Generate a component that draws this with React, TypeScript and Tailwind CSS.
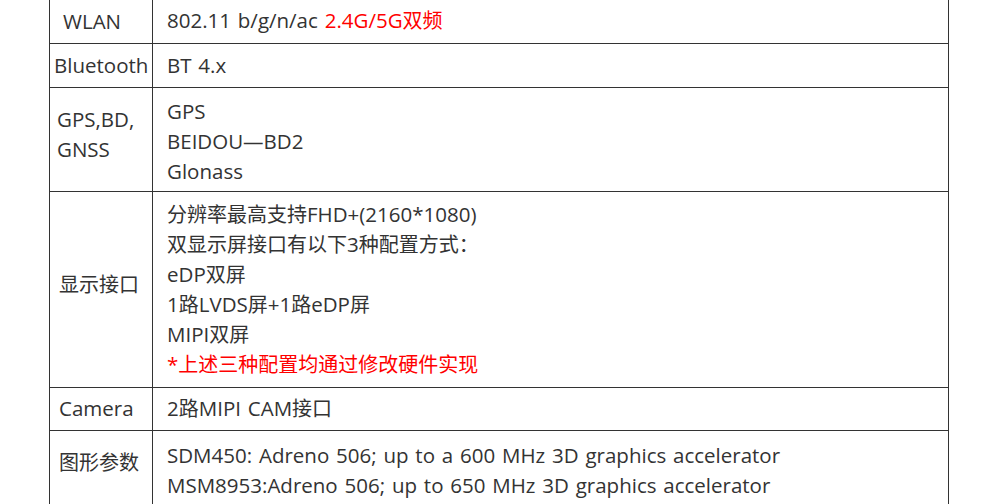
import type { ReactNode } from "react";

const CJK = /([\u3000-\u303f\u4e00-\u9fff\uff00-\uffef]+)/;

// latin runs are set a touch larger than the CJK runs, like the original's YaHei mix
function T({ s }: { s: string }) {
  return (
    <>
      {s.split(CJK).map((p, i) =>
        p === "" ? null : CJK.test(p) ? (
          <span key={i}>{p}</span>
        ) : (
          <span key={i} className="text-[20.5px] leading-none [word-spacing:1.5px]">
            {p}
          </span>
        ),
      )}
    </>
  );
}

type Row = {
  label: ReactNode;
  labelPad: string;
  lines: ReactNode[];
  h: string;
  textPad: string;
};

const rows: Row[] = [
  {
    label: <T s="WLAN" />,
    labelPad: "pl-[13px] pt-[7px]",
    lines: [
      <>
        <T s="802.11 b/g/n/ac " />
        <span className="text-[#ff0000]">
          <T s="2.4G/5G双频" />
        </span>
      </>,
    ],
    h: "h-[43px]",
    textPad: "pt-[6px]",
  },
  {
    label: <T s="Bluetooth" />,
    labelPad: "pl-[4px] pt-[7px]",
    lines: [<T s="BT 4.x" />],
    h: "h-[44px]",
    textPad: "pt-[7px]",
  },
  {
    label: (
      <>
        <T s="GPS,BD," />
        <br />
        <T s="GNSS" />
      </>
    ),
    labelPad: "pl-[7px] pt-[17px]",
    lines: [<T s="GPS" />, <T s="BEIDOU—BD2" />, <T s="Glonass" />],
    h: "h-[104px]",
    textPad: "pt-[9px]",
  },
  {
    label: "显示接口",
    labelPad: "pl-[9px] pt-[78px]",
    lines: [
      <T s="分辨率最高支持FHD+(2160*1080)" />,
      <T s="双显示屏接口有以下3种配置方式：" />,
      <T s="eDP双屏" />,
      <T s="1路LVDS屏+1路eDP屏" />,
      <T s="MIPI双屏" />,
      <span className="text-[#ff0000]">
        <T s="*上述三种配置均通过修改硬件实现" />
      </span>,
    ],
    h: "h-[196px]",
    textPad: "pt-[8px]",
  },
  {
    label: <T s="Camera" />,
    labelPad: "pl-[9px] pt-[6px]",
    lines: [<T s="2路MIPI CAM接口" />],
    h: "h-[43px]",
    textPad: "pt-[6px]",
  },
  {
    label: "图形参数",
    labelPad: "pl-[9px] pt-[17px]",
    lines: [
      <T s="SDM450: Adreno 506; up to a 600 MHz 3D graphics accelerator" />,
      <T s="MSM8953:Adreno 506; up to 650 MHz 3D graphics accelerator" />,
    ],
    h: "h-[100px]",
    textPad: "pt-[10px]",
  },
];

export default function App() {
  return (
    <div className="h-[504px] w-[1000px] overflow-hidden bg-white font-['Open_Sans','Noto_Sans_CJK_SC',sans-serif] text-[20px] leading-[30px] text-[#333]">
      <div className="ml-[49px] w-[900px] border-x border-[#333]">
        {rows.map((r, i) => (
          <div key={i} className={`flex border-[#333] ${r.h} ${i === 0 ? "" : "border-t"}`}>
            <div className={`w-[103px] shrink-0 border-r border-[#333] whitespace-nowrap ${r.labelPad}`}>
              {r.label}
            </div>
            <div className={`flex flex-col pl-[14px] ${r.textPad}`}>
              {r.lines.map((l, j) => (
                <div key={j} className="h-[30px] whitespace-nowrap">
                  {l}
                </div>
              ))}
            </div>
          </div>
        ))}
      </div>
    </div>
  );
}
